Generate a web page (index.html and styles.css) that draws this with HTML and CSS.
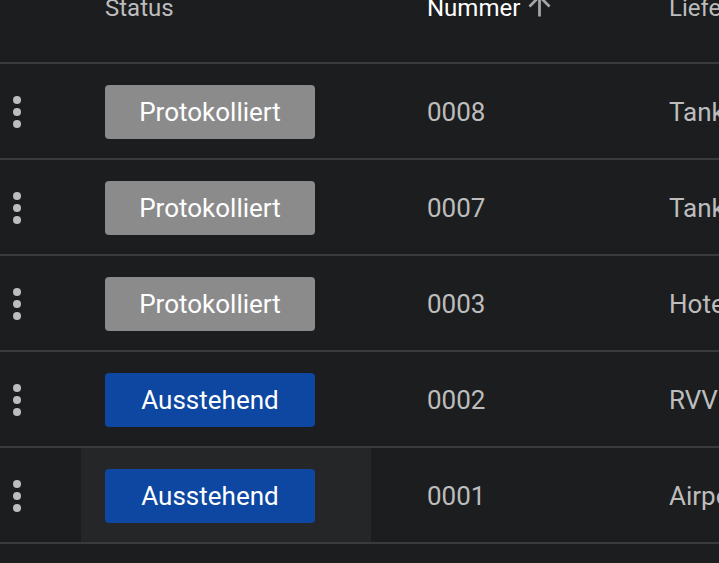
FILE: index.html
```html
<!DOCTYPE html>
<html lang="de">
<head>
<meta charset="utf-8">
<title>Belege</title>
<link rel="stylesheet" href="styles.css">
</head>
<body>
<div class="table">
  <div class="row head">
    <div class="cell"></div>
    <div class="cell th status-col"><span class="th-text">Status</span></div>
    <div class="cell th num-col"><span class="th-text active">Nummer</span><svg class="sort" viewBox="0 0 24 24"><path d="M4 12l1.41 1.41L11 7.83V20h2V7.83l5.58 5.59L20 12l-8-8-8 8z"/></svg></div>
    <div class="cell th vendor-col"><span class="th-text">Lieferant</span></div>
  </div>
  <div class="row">
    <div class="cell menu"><svg class="dots" viewBox="0 0 8 32"><circle cx="4" cy="4" r="4"/><circle cx="4" cy="16" r="4"/><circle cx="4" cy="28" r="4"/></svg></div>
    <div class="cell status-col"><span class="badge logged">Protokolliert</span></div>
    <div class="cell num-col">0008</div>
    <div class="cell vendor-col">Tankstelle</div>
  </div>
  <div class="row">
    <div class="cell menu"><svg class="dots" viewBox="0 0 8 32"><circle cx="4" cy="4" r="4"/><circle cx="4" cy="16" r="4"/><circle cx="4" cy="28" r="4"/></svg></div>
    <div class="cell status-col"><span class="badge logged">Protokolliert</span></div>
    <div class="cell num-col">0007</div>
    <div class="cell vendor-col">Tankstelle</div>
  </div>
  <div class="row">
    <div class="cell menu"><svg class="dots" viewBox="0 0 8 32"><circle cx="4" cy="4" r="4"/><circle cx="4" cy="16" r="4"/><circle cx="4" cy="28" r="4"/></svg></div>
    <div class="cell status-col"><span class="badge logged">Protokolliert</span></div>
    <div class="cell num-col">0003</div>
    <div class="cell vendor-col">Hotel</div>
  </div>
  <div class="row">
    <div class="cell menu"><svg class="dots" viewBox="0 0 8 32"><circle cx="4" cy="4" r="4"/><circle cx="4" cy="16" r="4"/><circle cx="4" cy="28" r="4"/></svg></div>
    <div class="cell status-col"><span class="badge pending">Ausstehend</span></div>
    <div class="cell num-col">0002</div>
    <div class="cell vendor-col">RVV</div>
  </div>
  <div class="row">
    <div class="cell menu"><svg class="dots" viewBox="0 0 8 32"><circle cx="4" cy="4" r="4"/><circle cx="4" cy="16" r="4"/><circle cx="4" cy="28" r="4"/></svg></div>
    <div class="cell status-col hover"><span class="badge pending">Ausstehend</span></div>
    <div class="cell num-col">0001</div>
    <div class="cell vendor-col">Airport</div>
  </div>
</div>
</body>
</html>
```
FILE: styles.css
```css
html, body {
  margin: 0;
  padding: 0;
  background: #1c1d1f;
  overflow: hidden;
}
body {
  font-family: Roboto, "Noto Sans", sans-serif;
  color: #bdbdbd;
  font-size: 26px;
}
.table {
  width: 719px;
}
.row {
  display: grid;
  grid-template-columns: 81px 290px 274px 1fr;
  height: 94px;
  border-bottom: 2px solid #3a3b3d;
  white-space: nowrap;
}
.row.head {
  height: 62px;
}
.cell {
  display: flex;
  align-items: center;
  overflow: hidden;
  padding-top: 2px;
  box-sizing: border-box;
}
.th {
  align-items: flex-start;
  padding-top: 0;
  font-size: 24px;
  line-height: 16px;
}
.th-text {
  color: #bdbdbd;
}
.th-text.active {
  color: #ffffff;
  font-weight: 400;
}
.sort {
  flex: none;
  width: 33px;
  height: 33px;
  margin-top: -11px;
  margin-left: 3px;
  fill: #a6a6a6;
}
.status-col {
  padding-left: 24px;
}
.num-col {
  padding-left: 56px;
}
.vendor-col {
  padding-left: 24px;
}
.menu {
  padding-left: 13px;
}
.dots {
  width: 8px;
  height: 32px;
  fill: #bdbdbd;
}
.hover {
  background: #252628;
}
.badge {
  display: flex;
  align-items: center;
  justify-content: center;
  width: 210px;
  height: 54px;
  border-radius: 4px;
  color: #ffffff;
  font-size: 26px;
}
.badge.logged {
  background: #8b8b8b;
}
.badge.pending {
  background: #0d47a1;
}
```
